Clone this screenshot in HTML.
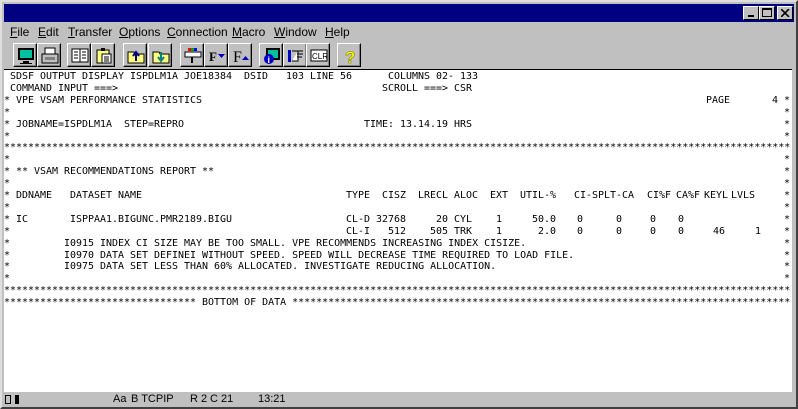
<!DOCTYPE html>
<html><head><meta charset="utf-8">
<style>
*{margin:0;padding:0;box-sizing:border-box}
body{width:798px;height:409px;background:#c0c0c0;position:relative;overflow:hidden;font-family:"Liberation Sans",sans-serif}
.abs{position:absolute}
#win{left:0;top:0;width:798px;height:409px;border:2px solid #dfdfdf;border-right-color:#404040;border-bottom-color:#404040}
#title{left:4px;top:4px;width:790px;height:18px;background:#000080}
.tb{top:6px;width:16px;height:14px;background:#c0c0c0;border:1px solid #fff;border-right-color:#000;border-bottom-color:#000}
.menu{top:24px;height:16px;font-size:12px;color:#000;line-height:16px}
.menu u{text-decoration:underline}
.btn{top:43px;width:24px;height:24px;background:#c0c0c0;border:1px solid #fff;border-right-color:#000;border-bottom-color:#000;box-shadow:inset -1px -1px 0 #808080}
.btn svg{position:absolute;left:3px;top:3px}
#term{left:4px;top:69px;width:788px;height:323px;background:#fff;border-top:1px solid #000}
.row{position:absolute;left:0;height:12px;width:788px;font-family:"DejaVu Sans Mono","Liberation Mono",monospace;font-size:9.97px;line-height:12px;color:#000;white-space:pre}
.row span{position:absolute;top:1px}
#status{left:4px;top:393px;width:790px;height:13px;background:#c0c0c0;font-family:"Liberation Sans",sans-serif;font-size:11px;line-height:13px}
#status span{position:absolute;top:0}
</style></head><body>
<div id="win" class="abs"></div>
<div id="title" class="abs"></div>
<div class="abs tb" style="left:743px"><div class="abs" style="left:4px;top:8px;width:6px;height:2px;background:#000"></div></div>
<div class="abs tb" style="left:759px"><div class="abs" style="left:2px;top:1px;width:10px;height:9px;border:1px solid #000;border-top-width:2px"></div></div>
<div class="abs tb" style="left:777px"><svg class="abs" style="left:3px;top:2px" width="9" height="8"><path d="M0 0L8 8M8 0L0 8" stroke="#000" stroke-width="1.6"/></svg></div>

<div class="abs menu" style="left:10px"><u>F</u>ile</div>
<div class="abs menu" style="left:38px"><u>E</u>dit</div>
<div class="abs menu" style="left:68px"><u>T</u>ransfer</div>
<div class="abs menu" style="left:119px"><u>O</u>ptions</div>
<div class="abs menu" style="left:167px"><u>C</u>onnection</div>
<div class="abs menu" style="left:232px"><u>M</u>acro</div>
<div class="abs menu" style="left:274px"><u>W</u>indow</div>
<div class="abs menu" style="left:325px"><u>H</u>elp</div>

<div class="abs btn" style="left:13px"><svg width="18" height="18"><rect x="1" y="1" width="16" height="12" fill="#000"/><rect x="3" y="3" width="12" height="8" fill="#00c0a0"/><rect x="6" y="14" width="6" height="2" fill="#000"/><rect x="3" y="16" width="12" height="1" fill="#000"/></svg></div>
<div class="abs btn" style="left:37px"><svg width="18" height="18"><rect x="4" y="1" width="10" height="6" fill="#fff" stroke="#000"/><rect x="1" y="7" width="16" height="9" fill="#c0c0c0" stroke="#000"/><rect x="4" y="10" width="10" height="3" fill="#808080"/></svg></div>
<div class="abs btn" style="left:67px"><svg width="18" height="18"><rect x="1" y="2" width="8" height="13" fill="#fff" stroke="#000"/><rect x="9" y="2" width="8" height="13" fill="#fff" stroke="#000"/><path d="M3 5h4M3 8h4M3 11h4M11 5h4M11 8h4M11 11h4" stroke="#000"/></svg></div>
<div class="abs btn" style="left:91px"><svg width="18" height="18"><rect x="2" y="3" width="12" height="13" fill="#ffff80" stroke="#000"/><rect x="6" y="1" width="4" height="3" fill="#000"/><rect x="7" y="7" width="9" height="9" fill="#fff" stroke="#000"/><path d="M9 10h5M9 12h5M9 14h5" stroke="#000"/></svg></div>
<div class="abs btn" style="left:123px"><svg width="18" height="18"><path d="M1 5h6l1 2h9v9H1z" fill="#ffff80" stroke="#000"/><path d="M9 14V7M6 9l3-4 3 4" stroke="#000080" stroke-width="2" fill="none"/></svg></div>
<div class="abs btn" style="left:148px"><svg width="18" height="18"><path d="M1 5h6l1 2h9v9H1z" fill="#ffff80" stroke="#000"/><path d="M9 5v7M6 10l3 4 3-4" stroke="#008080" stroke-width="2" fill="none"/></svg></div>
<div class="abs btn" style="left:180px"><svg width="18" height="18"><rect x="4" y="1" width="3" height="3" fill="#f00"/><rect x="7" y="1" width="3" height="3" fill="#0a0"/><rect x="10" y="1" width="3" height="3" fill="#00f"/><rect x="1" y="5" width="16" height="5" fill="#fff" stroke="#000"/><path d="M8 10v6" stroke="#000" stroke-width="2"/></svg></div>
<div class="abs btn" style="left:204px"><svg width="18" height="18"><text x="1" y="14" font-family="Liberation Serif" font-weight="bold" font-size="13">F</text><path d="M10 7h7l-3.5 4z" fill="#0000c0"/></svg></div>
<div class="abs btn" style="left:228px"><svg width="18" height="18"><text x="1" y="15" font-family="Liberation Serif" font-size="16">F</text><path d="M10 13h7l-3.5-4z" fill="#0000c0"/></svg></div>
<div class="abs btn" style="left:259px"><svg width="18" height="18"><rect x="3" y="1" width="14" height="12" fill="#000"/><rect x="5" y="3" width="10" height="8" fill="#00c0a0"/><circle cx="6" cy="12" r="5" fill="#0000c0"/><text x="4.5" y="16" fill="#fff" font-size="9" font-weight="bold">i</text></svg></div>
<div class="abs btn" style="left:283px"><svg width="18" height="18"><rect x="1" y="3" width="3" height="12" fill="#0000c0"/><path d="M5 4h11M5 14h6V4M10 7h6M10 10h5" stroke="#000" fill="#fff"/></svg></div>
<div class="abs btn" style="left:306px"><svg width="18" height="18"><rect x="1" y="3" width="16" height="11" fill="#fff" stroke="#000"/><text x="2" y="12" font-size="8" font-family="Liberation Sans">CLR</text></svg></div>
<div class="abs btn" style="left:337px"><svg width="18" height="18"><text x="4" y="16" font-size="17" font-weight="bold" fill="#ffff00" stroke="#808000" stroke-width="0.6">?</text></svg></div>

<div id="term" class="abs">
<div class="row" style="top:0px"><span style="left:6px">SDSF OUTPUT DISPLAY ISPDLM1A JOE18384</span><span style="left:240px">DSID</span><span style="left:282px">103 LINE 56</span><span style="left:384px">COLUMNS 02- 133</span></div>
<div class="row" style="top:11.9px"><span style="left:6px">COMMAND INPUT ===&gt;</span><span style="left:378px">SCROLL ===&gt; CSR</span></div>
<div class="row" style="top:23.8px"><span style="left:0">* VPE VSAM PERFORMANCE STATISTICS</span><span style="left:702px">PAGE</span><span style="left:768px">4</span><span style="left:780px">*</span></div>
<div class="row" style="top:35.7px"><span style="left:0">*</span><span style="left:780px">*</span></div>
<div class="row" style="top:47.6px"><span style="left:0">* JOBNAME=ISPDLM1A  STEP=REPRO</span><span style="left:360px">TIME: 13.14.19 HRS</span><span style="left:780px">*</span></div>
<div class="row" style="top:59.5px"><span style="left:0">*</span><span style="left:780px">*</span></div>
<div class="row" style="top:71.4px"><span style="left:0">***********************************************************************************************************************************</span></div>
<div class="row" style="top:83.3px"><span style="left:0">*</span><span style="left:780px">*</span></div>
<div class="row" style="top:95.2px"><span style="left:0">* ** VSAM RECOMMENDATIONS REPORT **</span><span style="left:780px">*</span></div>
<div class="row" style="top:107.1px"><span style="left:0">*</span><span style="left:780px">*</span></div>
<div class="row" style="top:119px"><span style="left:0">* DDNAME</span><span style="left:66px">DATASET NAME</span><span style="left:342px">TYPE</span><span style="left:378px">CISZ</span><span style="left:414px">LRECL</span><span style="left:450px">ALOC</span><span style="left:486px">EXT</span><span style="left:516px">UTIL-%</span><span style="left:570px">CI-SPLT-CA</span><span style="left:643px">CI%F</span><span style="left:672px">CA%F</span><span style="left:700px">KEYL</span><span style="left:727px">LVLS</span><span style="left:780px">*</span></div>
<div class="row" style="top:130.9px"><span style="left:0">*</span><span style="left:780px">*</span></div>
<div class="row" style="top:142.8px"><span style="left:0">* IC</span><span style="left:66px">ISPPAA1.BIGUNC.PMR2189.BIGU</span><span style="left:342px">CL-D</span><span style="left:372px">32768</span><span style="left:432px">20</span><span style="left:450px">CYL</span><span style="left:492px">1</span><span style="left:528px">50.0</span><span style="left:573px">0</span><span style="left:612px">0</span><span style="left:646px">0</span><span style="left:674px">0</span><span style="left:780px">*</span></div>
<div class="row" style="top:154.7px"><span style="left:0">*</span><span style="left:342px">CL-I</span><span style="left:384px">512</span><span style="left:426px">505</span><span style="left:450px">TRK</span><span style="left:492px">1</span><span style="left:534px">2.0</span><span style="left:573px">0</span><span style="left:612px">0</span><span style="left:646px">0</span><span style="left:674px">0</span><span style="left:709px">46</span><span style="left:751px">1</span><span style="left:780px">*</span></div>
<div class="row" style="top:166.6px"><span style="left:0">*</span><span style="left:60px">I0915 INDEX CI SIZE MAY BE TOO SMALL. VPE RECOMMENDS INCREASING INDEX CISIZE.</span><span style="left:780px">*</span></div>
<div class="row" style="top:178.5px"><span style="left:0">*</span><span style="left:60px">I0970 DATA SET DEFINEI WITHOUT SPEED. SPEED WILL DECREASE TIME REQUIRED TO LOAD FILE.</span><span style="left:780px">*</span></div>
<div class="row" style="top:190.4px"><span style="left:0">*</span><span style="left:60px">I0975 DATA SET LESS THAN 60% ALLOCATED. INVESTIGATE REDUCING ALLOCATION.</span><span style="left:780px">*</span></div>
<div class="row" style="top:202.3px"><span style="left:0">*</span><span style="left:780px">*</span></div>
<div class="row" style="top:214.2px"><span style="left:0">***********************************************************************************************************************************</span></div>
<div class="row" style="top:226.1px"><span style="left:0">******************************** BOTTOM OF DATA ***********************************************************************************</span></div>
</div>
<div class="abs" style="left:792px;top:69px;width:2px;height:324px;background:#c0c0c0"></div>

<div id="status" class="abs">
<span style="left:1px;top:2px;width:6px;height:9px;border:1px solid #000;font-size:0"></span>
<span style="left:11px;top:2px;width:4px;height:9px;background:#000"></span>
<span style="left:109px">Aa</span>
<span style="left:127px">B TCPIP</span>
<span style="left:186px">R 2</span>
<span style="left:206px">C 21</span>
<span style="left:254px">13:21</span>
</div>
</body></html>
